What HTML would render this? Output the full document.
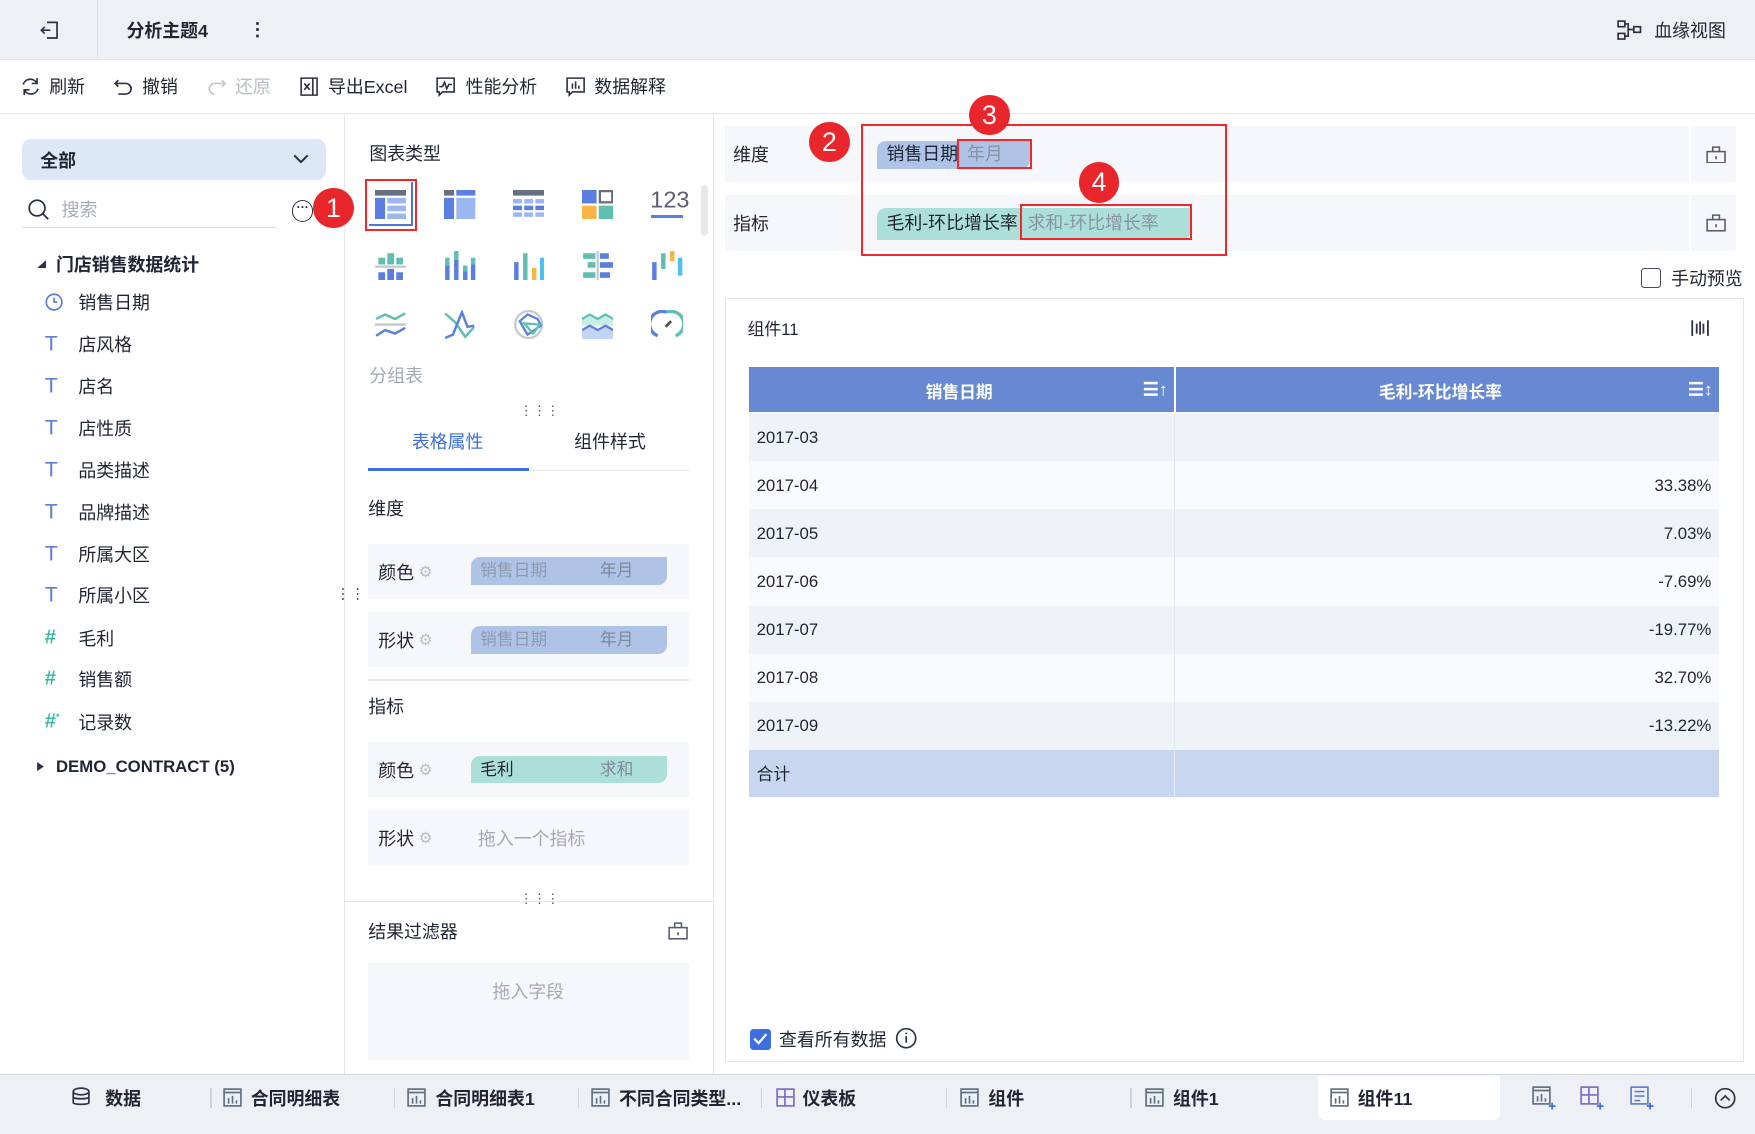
<!DOCTYPE html>
<html><head><meta charset="utf-8">
<style>
*{box-sizing:border-box;margin:0;padding:0}
html,body{width:1755px;height:1134px;overflow:hidden;background:#fff}
#r{zoom:1.11926;width:1568px;height:1013px;position:relative;font-family:"Liberation Sans","Noto Sans CJK SC",sans-serif;font-size:16px;color:#1f2533}
.a{position:absolute;white-space:nowrap}
.c{position:absolute;transform:translateY(-50%);white-space:nowrap}
.badge{position:absolute;width:36px;height:36px;border-radius:50%;background:#e8262b;color:#fff;font-size:24px;text-align:center;line-height:36px;font-family:"Liberation Sans",sans-serif}
.rb{position:absolute;border:2.5px solid #f2262d}
.row{position:absolute;background:#f6f7fb}
.pill{position:absolute;border-radius:8px 0 8px 0;height:25px;line-height:25px;font-size:15px}
.gray{color:#9aa1ad}
svg{position:absolute}
</style></head><body><div id="r">
<!-- top bar -->
<div class="a" style="left:0;top:0;width:1568px;height:54px;background:#edf0f5;border-bottom:1px solid #dfe3ea"></div>
<div class="a" style="left:87px;top:0;width:1px;height:54px;background:#dfe3ea"></div>
<svg style="left:34px;top:17px" width="20" height="20" viewBox="0 0 20 20" fill="none" stroke="#2a3244" stroke-width="1.5"><path d="M8 3h9v14H8M11 10H3M6 7l-3 3 3 3"/></svg>
<div class="c" style="left:113px;top:27px;font-weight:bold;font-size:16px">分析主题4</div>
<div class="c" style="left:222px;top:27px;font-weight:bold">⋮</div>
<svg style="left:1445px;top:18px" width="22" height="18" viewBox="0 0 22 18" fill="none" stroke="#2a3244" stroke-width="1.5"><rect x="1" y="1" width="6" height="5"/><rect x="1" y="12" width="6" height="5"/><rect x="15" y="6" width="6" height="5"/><path d="M7 3.5h3v11H7M10 8.5h5"/></svg>
<div class="c" style="left:1478px;top:27px">血缘视图</div>
<!-- toolbar -->
<div class="a" style="left:0;top:101px;width:1568px;height:1px;background:#e3e6ec"></div>
<svg style="left:18px;top:68px" width="19" height="19" viewBox="0 0 20 20" fill="none" stroke="#2a3244" stroke-width="1.6"><path d="M16 7a7 7 0 0 0-13 1M4 13a7 7 0 0 0 13-1M16 2v5h-5M4 18v-5h5"/></svg>
<div class="c" style="left:44px;top:77px">刷新</div>
<svg style="left:101px;top:68px" width="19" height="19" viewBox="0 0 20 20" fill="none" stroke="#2a3244" stroke-width="1.6"><path d="M5 4L2 7l3 3M2 7h10a5 5 0 0 1 0 10H5"/></svg>
<div class="c" style="left:127px;top:77px">撤销</div>
<svg style="left:184px;top:68px" width="19" height="19" viewBox="0 0 20 20" fill="none" stroke="#c2c7d0" stroke-width="1.6"><path d="M15 4l3 3-3 3M18 7H8a5 5 0 0 0 0 10"/></svg>
<div class="c gray" style="left:210px;top:77px;color:#b9bec8">还原</div>
<svg style="left:267px;top:68px" width="19" height="19" viewBox="0 0 20 20" fill="none" stroke="#2a3244" stroke-width="1.5"><path d="M2 2h11v16H2zM13 2h4v16h-4M5 7l5 6M10 7l-5 6"/></svg>
<div class="c" style="left:293px;top:77px">导出Excel</div>
<svg style="left:389px;top:68px" width="19" height="19" viewBox="0 0 20 20" fill="none" stroke="#2a3244" stroke-width="1.5"><path d="M2 2h16v13H7l-3 3v-3H2zM4 10h3l2-4 2 6 2-4h3"/></svg>
<div class="c" style="left:416px;top:77px">性能分析</div>
<svg style="left:505px;top:68px" width="19" height="19" viewBox="0 0 20 20" fill="none" stroke="#2a3244" stroke-width="1.5"><path d="M2 2h16v13H7l-3 3v-3H2zM7 7v5M10 5v7M13 9v3"/></svg>
<div class="c" style="left:531px;top:77px">数据解释</div>

<!-- left panel -->
<div class="a" style="left:307px;top:102px;width:1px;height:858px;background:#e3e6ec"></div>
<div class="a" style="left:20px;top:124px;width:271px;height:37px;background:#dce7f8;border-radius:8px"></div>
<div class="c" style="left:36px;top:143px;font-weight:bold">全部</div>
<svg style="left:261px;top:136px" width="16" height="12" viewBox="0 0 16 12" fill="none" stroke="#2a3244" stroke-width="1.8"><path d="M2 3l6 6 6-6"/></svg>
<svg style="left:24px;top:177px" width="21" height="21" viewBox="0 0 21 21" fill="none" stroke="#2a3244" stroke-width="1.6"><circle cx="9" cy="9" r="7"/><path d="M14 14l5 5"/></svg>
<div class="c" style="left:55px;top:187px;color:#a7adb8">搜索</div>
<div class="a" style="left:20px;top:203px;width:227px;height:1px;background:#d9dde4"></div>
<div class="a" style="left:261px;top:179px;width:19px;height:19px;border:1.5px solid #2a3244;border-radius:50%;font-size:11px;line-height:12px;text-align:center;font-weight:bold">···</div>
<div class="badge" style="left:280px;top:168px">1</div>
<svg style="left:32px;top:231px" width="10" height="10" viewBox="0 0 10 10"><path d="M1 8h8V1z" fill="#2a3244"/></svg>
<div class="c" style="left:50px;top:236px;font-weight:bold">门店销售数据统计</div>
<svg style="left:39px;top:261px" width="18" height="18" viewBox="0 0 18 18" fill="none" stroke="#5b7fd6" stroke-width="1.5"><circle cx="9" cy="9" r="7"/><path d="M9 5v4h3"/></svg>
<div class="c" style="left:70px;top:270px">销售日期</div>
<div class="c" style="left:40px;top:307px;color:#5b7fd6;font-size:19px">T</div><div class="c" style="left:70px;top:307px">店风格</div>
<div class="c" style="left:40px;top:345px;color:#5b7fd6;font-size:19px">T</div><div class="c" style="left:70px;top:345px">店名</div>
<div class="c" style="left:40px;top:382px;color:#5b7fd6;font-size:19px">T</div><div class="c" style="left:70px;top:382px">店性质</div>
<div class="c" style="left:40px;top:420px;color:#5b7fd6;font-size:19px">T</div><div class="c" style="left:70px;top:420px">品类描述</div>
<div class="c" style="left:40px;top:457px;color:#5b7fd6;font-size:19px">T</div><div class="c" style="left:70px;top:457px">品牌描述</div>
<div class="c" style="left:40px;top:495px;color:#5b7fd6;font-size:19px">T</div><div class="c" style="left:70px;top:495px">所属大区</div>
<div class="c" style="left:40px;top:532px;color:#5b7fd6;font-size:19px">T</div><div class="c" style="left:70px;top:532px">所属小区</div>
<div class="c" style="left:40px;top:570px;color:#3fb8a3;font-size:18px;font-weight:bold">#</div><div class="c" style="left:70px;top:570px">毛利</div>
<div class="c" style="left:40px;top:607px;color:#3fb8a3;font-size:18px;font-weight:bold">#</div><div class="c" style="left:70px;top:607px">销售额</div>
<div class="c" style="left:40px;top:645px;color:#3fb8a3;font-size:18px;font-weight:bold">#<sup style="font-size:8px">*</sup></div><div class="c" style="left:70px;top:645px">记录数</div>
<svg style="left:32px;top:680px" width="8" height="10" viewBox="0 0 8 10"><path d="M1 1l6 4-6 4z" fill="#2a3244"/></svg>
<div class="c" style="left:50px;top:685px;font-weight:bold;font-size:15px">DEMO_CONTRACT (5)</div>
<div class="c" style="left:300px;top:532px;color:#555;font-size:13px;line-height:6px">⋮⋮</div>

<!-- middle panel -->
<div class="a" style="left:637px;top:102px;width:1px;height:858px;background:#e3e6ec"></div>
<div class="c" style="left:330px;top:137px">图表类型</div>
<div class="a" style="left:626px;top:165px;width:7px;height:46px;background:#e6e8ec;border-radius:4px"></div>
<div class="rb" style="left:326px;top:160px;width:47px;height:46px"></div>
<div class="a" style="left:330px;top:163px;width:39px;height:39px;border-bottom:2px solid #4b76e0;border-right:2px solid #4b76e0"></div>
<svg style="left:335px;top:170px" width="28" height="26" viewBox="0 0 28 26"><rect x="0" y="0" width="28" height="5" fill="#666f80"/><rect x="0" y="7" width="9" height="19" fill="#5b7fe0"/><rect x="11" y="7" width="17" height="5" fill="#9bb6f0"/><rect x="11" y="14" width="17" height="5" fill="#9bb6f0"/><rect x="11" y="21" width="17" height="5" fill="#9bb6f0"/></svg>
<svg style="left:397px;top:170px" width="28" height="26" viewBox="0 0 28 26"><rect x="0" y="0" width="9" height="5" fill="#666f80"/><rect x="11" y="0" width="17" height="5" fill="#5b7fe0"/><rect x="0" y="7" width="9" height="19" fill="#5b7fe0"/><rect x="11" y="7" width="17" height="19" fill="#9bb6f0"/></svg>
<svg style="left:458px;top:170px" width="28" height="26" viewBox="0 0 28 26"><rect x="0" y="0" width="28" height="5" fill="#666f80"/><g fill="#9bb6f0"><rect x="0" y="8" width="8" height="4"/><rect x="10" y="8" width="8" height="4"/><rect x="20" y="8" width="8" height="4"/><rect x="0" y="20" width="8" height="4"/><rect x="10" y="20" width="8" height="4"/><rect x="20" y="20" width="8" height="4"/></g><g fill="#5b7fe0"><rect x="0" y="14" width="8" height="4"/><rect x="10" y="14" width="8" height="4"/><rect x="20" y="14" width="8" height="4"/></g></svg>
<svg style="left:520px;top:170px" width="28" height="26" viewBox="0 0 28 26"><rect x="0" y="0" width="13" height="12" fill="#5b7fe0"/><rect x="16" y="1" width="11" height="10" fill="none" stroke="#666f80" stroke-width="2"/><rect x="0" y="14" width="13" height="12" fill="#f7b547"/><rect x="15" y="14" width="13" height="12" fill="#5fbfb0"/></svg>
<div class="c" style="left:581px;top:179px;font-size:21px;color:#5a6070">123</div>
<div class="a" style="left:582px;top:192px;width:28px;height:3px;background:#5b7fe0"></div>
<svg style="left:335px;top:224px" width="28" height="26" viewBox="0 0 28 26"><g fill="#5fbfb0"><rect x="3" y="6" width="6" height="6"/><rect x="11" y="2" width="6" height="10"/><rect x="19" y="6" width="6" height="6"/></g><rect x="0" y="13" width="28" height="2" fill="#c3c8d2"/><g fill="#5b7fe0"><rect x="3" y="19" width="6" height="7"/><rect x="11" y="16" width="6" height="10"/><rect x="19" y="19" width="6" height="7"/></g></svg>
<svg style="left:397px;top:224px" width="28" height="26" viewBox="0 0 28 26"><g fill="#5b7fe0"><rect x="1" y="13" width="4" height="13"/><rect x="9" y="8" width="4" height="18"/><rect x="17" y="18" width="4" height="8"/><rect x="24" y="12" width="4" height="14"/></g><g fill="#5fbfb0"><rect x="1" y="6" width="4" height="7"/><rect x="9" y="0" width="4" height="8"/><rect x="17" y="13" width="4" height="5"/><rect x="24" y="6" width="4" height="6"/></g></svg>
<svg style="left:458px;top:224px" width="28" height="26" viewBox="0 0 28 26"><rect x="1" y="10" width="4" height="16" fill="#5b7fe0"/><rect x="9" y="2" width="4" height="24" fill="#5fbfb0"/><rect x="17" y="15" width="4" height="11" fill="#f7b547"/><rect x="24" y="6" width="4" height="20" fill="#4ec1f0"/></svg>
<svg style="left:520px;top:224px" width="28" height="26" viewBox="0 0 28 26"><rect x="13" y="0" width="2" height="26" fill="#c3c8d2"/><g fill="#5fbfb0"><rect x="1" y="2" width="11" height="5"/><rect x="5" y="10" width="7" height="5"/><rect x="1" y="19" width="11" height="5"/></g><g fill="#5b7fe0"><rect x="16" y="2" width="8" height="5"/><rect x="16" y="10" width="12" height="5"/><rect x="16" y="19" width="9" height="5"/></g></svg>
<svg style="left:582px;top:224px" width="28" height="26" viewBox="0 0 28 26"><rect x="1" y="10" width="4" height="16" fill="#5b7fe0"/><rect x="9" y="2" width="4" height="14" fill="#5fbfb0"/><rect x="17" y="0" width="4" height="9" fill="#f7b547"/><rect x="24" y="6" width="4" height="16" fill="#4ec1f0"/></svg>
<svg style="left:335px;top:277px" width="28" height="26" viewBox="0 0 28 26" fill="none" stroke-width="2.2"><path d="M1 8l8-4 9 4 9-5" stroke="#5fbfb0"/><path d="M0 13h28" stroke="#c3c8d2"/><path d="M1 23l8-5 9 3 9-5" stroke="#5b7fe0"/></svg>
<svg style="left:397px;top:277px" width="28" height="26" viewBox="0 0 28 26" fill="none" stroke-width="2.2"><path d="M1 3l9 8 9 13 8-9" stroke="#5fbfb0"/><path d="M1 25l7-3 8-20 5 13 6-1" stroke="#5b7fe0"/></svg>
<svg style="left:458px;top:277px" width="28" height="26" viewBox="0 0 28 26" fill="none" stroke-width="2"><circle cx="14" cy="13" r="12" stroke="#c3c8d2"/><path d="M6 10l7-6 9 4 3 6-12 8z" stroke="#5b7fe0"/><path d="M10 12l14 1-6 8z" stroke="#5fbfb0"/></svg>
<svg style="left:520px;top:277px" width="28" height="26" viewBox="0 0 28 26"><path d="M0 8l7-4 7 4 7-4 7 4v6H0z" fill="#c8ece6"/><path d="M0 8l7-4 7 4 7-4 7 4" stroke="#5fbfb0" stroke-width="2" fill="none"/><path d="M0 18l7-4 7 4 7-4 7 4v8H0z" fill="#c5d4f5"/><path d="M0 18l7-4 7 4 7-4 7 4" stroke="#5b7fe0" stroke-width="2" fill="none"/></svg>
<svg style="left:582px;top:277px" width="28" height="26" viewBox="0 0 28 26" fill="none" stroke-width="3"><path d="M6 23A11 11 0 0 1 14 2" stroke="#5b7fe0"/><path d="M14 2a11 11 0 0 1 8 21" stroke="#5fbfb0"/><path d="M13 15l5-5" stroke="#555" stroke-width="2.5"/></svg>
<div class="c" style="left:330px;top:335px;color:#a3a9b4">分组表</div>
<div class="c" style="left:464px;top:367px;font-size:12px;color:#555">⋮⋮⋮</div>
<div class="c" style="left:368px;top:394px;color:#3e6fe0">表格属性</div>
<div class="c" style="left:513px;top:394px">组件样式</div>
<div class="a" style="left:329px;top:420px;width:287px;height:1px;background:#e3e6ec"></div>
<div class="a" style="left:329px;top:418px;width:144px;height:3px;background:#3e6fe0"></div>
<div class="c" style="left:329px;top:454px">维度</div>
<div class="row" style="left:329px;top:486px;width:287px;height:49px"></div>
<div class="c" style="left:338px;top:511px">颜色</div><div class="c" style="left:374px;top:511px;color:#b8bdc6;font-size:14px">⚙</div>
<div class="pill" style="left:421px;top:498px;width:175px;background:#aec3e6"><span style="position:absolute;left:8px;color:#8e9ab0">销售日期</span><span style="position:absolute;left:115px;color:#80889a">年月</span></div>
<div class="row" style="left:329px;top:547px;width:287px;height:49px"></div>
<div class="c" style="left:338px;top:572px">形状</div><div class="c" style="left:374px;top:572px;color:#b8bdc6;font-size:14px">⚙</div>
<div class="pill" style="left:421px;top:559px;width:175px;background:#aec3e6"><span style="position:absolute;left:8px;color:#8e9ab0">销售日期</span><span style="position:absolute;left:115px;color:#80889a">年月</span></div>
<div class="a" style="left:329px;top:607px;width:287px;height:1px;background:#e3e6ec"></div>
<div class="c" style="left:329px;top:631px">指标</div>
<div class="row" style="left:329px;top:663px;width:287px;height:49px"></div>
<div class="c" style="left:338px;top:688px">颜色</div><div class="c" style="left:374px;top:688px;color:#b8bdc6;font-size:14px">⚙</div>
<div class="pill" style="left:421px;top:675px;width:175px;background:#acdfd8"><span style="position:absolute;left:8px">毛利</span><span style="position:absolute;left:115px;color:#80889a">求和</span></div>
<div class="row" style="left:329px;top:724px;width:287px;height:49px"></div>
<div class="c" style="left:338px;top:749px">形状</div><div class="c" style="left:374px;top:749px;color:#b8bdc6;font-size:14px">⚙</div>
<div class="c" style="left:427px;top:749px;color:#a3a9b4">拖入一个指标</div>
<div class="c" style="left:464px;top:803px;font-size:12px;color:#555">⋮⋮⋮</div>
<div class="a" style="left:308px;top:805px;width:329px;height:1px;background:#e3e6ec"></div>
<div class="c" style="left:329px;top:832px">结果过滤器</div>
<svg style="left:597px;top:824px" width="18" height="16" viewBox="0 0 18 16" fill="none" stroke="#555d6c" stroke-width="1.4"><rect x="1" y="5" width="16" height="10"/><path d="M6 5V1h6v4M9 9v3"/></svg>
<div class="row" style="left:329px;top:860px;width:287px;height:87px"></div>
<div class="c" style="left:440px;top:885px;color:#a3a9b4">拖入字段</div>

<!-- right -->
<div class="row" style="left:648px;top:113px;width:903px;height:50px"></div>
<div class="a" style="left:768px;top:113px;width:2px;height:50px;background:#fff"></div>
<div class="a" style="left:1509px;top:113px;width:2px;height:50px;background:#fff"></div>
<div class="c" style="left:655px;top:138px">维度</div>
<div class="pill" style="left:784px;top:126px;width:136px;background:#aec3e6;font-size:16px"><span style="position:absolute;left:8px">销售日期</span><span style="position:absolute;left:80px;color:#8a93a3">年月</span></div>
<svg style="left:1524px;top:130px" width="18" height="16" viewBox="0 0 18 16" fill="none" stroke="#555d6c" stroke-width="1.4"><rect x="1" y="5" width="16" height="10"/><path d="M6 5V1h6v4M9 9v3"/></svg>
<div class="row" style="left:648px;top:174px;width:903px;height:50px"></div>
<div class="a" style="left:768px;top:174px;width:2px;height:50px;background:#fff"></div>
<div class="a" style="left:1509px;top:174px;width:2px;height:50px;background:#fff"></div>
<div class="c" style="left:655px;top:199px">指标</div>
<div class="pill" style="left:784px;top:186px;width:280px;height:28px;line-height:28px;background:#acdfd8;font-size:16px"><span style="position:absolute;left:8px">毛利-环比增长率</span><span style="position:absolute;left:134px;color:#8a93a3">求和-环比增长率</span></div>
<svg style="left:1524px;top:191px" width="18" height="16" viewBox="0 0 18 16" fill="none" stroke="#555d6c" stroke-width="1.4"><rect x="1" y="5" width="16" height="10"/><path d="M6 5V1h6v4M9 9v3"/></svg>
<div class="rb" style="left:769px;top:111px;width:327px;height:118px"></div>
<div class="rb" style="left:855px;top:124px;width:67px;height:27px"></div>
<div class="rb" style="left:911px;top:182px;width:154px;height:32px"></div>
<div class="badge" style="left:723px;top:109px">2</div>
<div class="badge" style="left:866px;top:85px">3</div>
<div class="badge" style="left:964px;top:145px">4</div>
<div class="a" style="left:1466px;top:239px;width:18px;height:18px;border:1.5px solid #444c5a;border-radius:3px"></div>
<div class="c" style="left:1493px;top:248px">手动预览</div>

<div class="a" style="left:648px;top:266px;width:910px;height:683px;border:1px solid #e3e6ec"></div>
<div class="c" style="left:668px;top:293px;font-size:15px">组件11</div>
<svg style="left:1510px;top:284px" width="18" height="18" viewBox="0 0 18 18" stroke="#2a3244" stroke-width="1.6"><path d="M2 2v14M6 5v9M9 3v12M12 5v9M16 2v14"/></svg>
<div class="a" style="left:669px;top:328px;width:867px;height:40px;background:#6689d2"></div>
<div class="a" style="left:1049px;top:328px;width:2px;height:384px;background:#fff"></div>
<div class="c" style="left:827px;top:349px;color:#fff;font-weight:bold;font-size:15px">销售日期</div>
<div class="c" style="left:1021px;top:348px;color:#fff;font-weight:bold">☰↑</div>
<div class="c" style="left:1232px;top:349px;color:#fff;font-weight:bold;font-size:15px">毛利-环比增长率</div>
<div class="c" style="left:1508px;top:348px;color:#fff;font-weight:bold">☰↕</div>
<div class="a" style="left:669px;top:369px;width:867px;height:43px;background:#eef2f9"></div>
<div class="a" style="left:669px;top:412px;width:867px;height:43px;background:#f9fafd"></div>
<div class="a" style="left:669px;top:455px;width:867px;height:43px;background:#eef2f9"></div>
<div class="a" style="left:669px;top:498px;width:867px;height:43px;background:#f9fafd"></div>
<div class="a" style="left:669px;top:541px;width:867px;height:43px;background:#eef2f9"></div>
<div class="a" style="left:669px;top:584px;width:867px;height:43px;background:#f9fafd"></div>
<div class="a" style="left:669px;top:627px;width:867px;height:43px;background:#eef2f9"></div>
<div class="a" style="left:669px;top:670px;width:867px;height:42px;background:#c8d6ef"></div>
<div class="a" style="left:1049px;top:369px;width:1px;height:343px;background:#e3e8f2"></div>
<div class="c" style="left:676px;top:391px;font-size:15px">2017-03</div>
<div class="c" style="left:676px;top:434px;font-size:15px">2017-04</div><div class="c" style="right:39px;top:434px;font-size:15px">33.38%</div>
<div class="c" style="left:676px;top:477px;font-size:15px">2017-05</div><div class="c" style="right:39px;top:477px;font-size:15px">7.03%</div>
<div class="c" style="left:676px;top:520px;font-size:15px">2017-06</div><div class="c" style="right:39px;top:520px;font-size:15px">-7.69%</div>
<div class="c" style="left:676px;top:563px;font-size:15px">2017-07</div><div class="c" style="right:39px;top:563px;font-size:15px">-19.77%</div>
<div class="c" style="left:676px;top:606px;font-size:15px">2017-08</div><div class="c" style="right:39px;top:606px;font-size:15px">32.70%</div>
<div class="c" style="left:676px;top:649px;font-size:15px">2017-09</div><div class="c" style="right:39px;top:649px;font-size:15px">-13.22%</div>
<div class="c" style="left:676px;top:691px;font-size:15px">合计</div>
<div class="a" style="left:670px;top:919px;width:19px;height:19px;background:#3e6fe0;border-radius:3px"></div>
<svg style="left:673px;top:923px" width="13" height="11" viewBox="0 0 13 11" fill="none" stroke="#fff" stroke-width="2"><path d="M1 5l4 4 7-8"/></svg>
<div class="c" style="left:696px;top:928px">查看所有数据</div>
<svg style="left:800px;top:918px" width="20" height="20" viewBox="0 0 20 20" fill="none" stroke="#2a3244" stroke-width="1.5"><circle cx="10" cy="10" r="8.5"/><path d="M10 8v6M10 5v1.5"/></svg>

<!-- bottom bar -->
<div class="a" style="left:0;top:960px;width:1568px;height:53px;background:#edf0f5;border-top:1px solid #d3d8e0"></div>
<div class="a" style="left:1178px;top:961px;width:162px;height:40px;background:#fff;border-radius:0 0 6px 6px"></div>
<svg style="left:63px;top:971px" width="18" height="18" viewBox="0 0 18 18" fill="none" stroke="#2a3244" stroke-width="1.5"><ellipse cx="9" cy="4" rx="7" ry="3"/><path d="M2 4v10c0 2 14 2 14 0V4M2 9c0 2 14 2 14 0"/></svg>
<div class="c" style="left:94px;top:981px;font-weight:bold">数据</div>
<div class="a" style="left:188px;top:972px;width:1px;height:18px;background:#cfd4dc"></div>
<div class="a" style="left:352px;top:972px;width:1px;height:18px;background:#cfd4dc"></div>
<div class="a" style="left:516px;top:972px;width:1px;height:18px;background:#cfd4dc"></div>
<div class="a" style="left:680px;top:972px;width:1px;height:18px;background:#cfd4dc"></div>
<div class="a" style="left:845px;top:972px;width:1px;height:18px;background:#cfd4dc"></div>
<div class="a" style="left:1010px;top:972px;width:1px;height:18px;background:#cfd4dc"></div>
<div class="a" style="left:1511px;top:972px;width:1px;height:18px;background:#cfd4dc"></div>
<svg style="left:199px;top:972px" width="17" height="17" viewBox="0 0 17 17" fill="none" stroke="#607080" stroke-width="1.5"><rect x="1" y="1" width="15" height="15"/><path d="M1 4h15M5 14V9M8.5 14V7M12 14v-3"/></svg>
<div class="c" style="left:224px;top:981px;font-weight:bold">合同明细表</div>
<svg style="left:364px;top:972px" width="17" height="17" viewBox="0 0 17 17" fill="none" stroke="#607080" stroke-width="1.5"><rect x="1" y="1" width="15" height="15"/><path d="M1 4h15M5 14V9M8.5 14V7M12 14v-3"/></svg>
<div class="c" style="left:389px;top:981px;font-weight:bold">合同明细表1</div>
<svg style="left:528px;top:972px" width="17" height="17" viewBox="0 0 17 17" fill="none" stroke="#607080" stroke-width="1.5"><rect x="1" y="1" width="15" height="15"/><path d="M1 4h15M5 14V9M8.5 14V7M12 14v-3"/></svg>
<div class="c" style="left:553px;top:981px;font-weight:bold">不同合同类型...</div>
<svg style="left:693px;top:972px" width="17" height="17" viewBox="0 0 17 17" fill="none" stroke="#7b6cc9" stroke-width="1.5"><rect x="1" y="1" width="15" height="15"/><path d="M1 8h15M8 1v15"/></svg>
<div class="c" style="left:717px;top:981px;font-weight:bold">仪表板</div>
<svg style="left:858px;top:972px" width="17" height="17" viewBox="0 0 17 17" fill="none" stroke="#607080" stroke-width="1.5"><rect x="1" y="1" width="15" height="15"/><path d="M1 4h15M5 14V9M8.5 14V7M12 14v-3"/></svg>
<div class="c" style="left:883px;top:981px;font-weight:bold">组件</div>
<svg style="left:1023px;top:972px" width="17" height="17" viewBox="0 0 17 17" fill="none" stroke="#607080" stroke-width="1.5"><rect x="1" y="1" width="15" height="15"/><path d="M1 4h15M5 14V9M8.5 14V7M12 14v-3"/></svg>
<div class="c" style="left:1048px;top:981px;font-weight:bold">组件1</div>
<svg style="left:1188px;top:972px" width="17" height="17" viewBox="0 0 17 17" fill="none" stroke="#607080" stroke-width="1.5"><rect x="1" y="1" width="15" height="15"/><path d="M1 4h15M5 14V9M8.5 14V7M12 14v-3"/></svg>
<div class="c" style="left:1213px;top:981px;font-weight:bold">组件11</div>
<svg style="left:1369px;top:970px" width="22" height="22" viewBox="0 0 22 22" fill="none" stroke="#607080" stroke-width="1.5"><rect x="1" y="1" width="15" height="15"/><path d="M1 4h15M5 14V9M8.5 14V7M12 14v-3"/><path d="M18 15v6M15 18h6" stroke="#3e6fe0"/></svg>
<svg style="left:1412px;top:970px" width="22" height="22" viewBox="0 0 22 22" fill="none" stroke="#7b6cc9" stroke-width="1.5"><rect x="1" y="1" width="15" height="15"/><path d="M1 8h15M8 1v15"/><path d="M18 15v6M15 18h6" stroke="#3e6fe0"/></svg>
<svg style="left:1456px;top:970px" width="22" height="22" viewBox="0 0 22 22" fill="none" stroke="#5b7fd6" stroke-width="1.5"><rect x="1" y="1" width="15" height="15"/><path d="M4 5h9M4 9h9M4 13h5"/><path d="M18 15v6M15 18h6" stroke="#3e6fe0"/></svg>
<svg style="left:1531px;top:971px" width="20" height="20" viewBox="0 0 20 20" fill="none" stroke="#2a3244" stroke-width="1.5"><circle cx="10" cy="10" r="8.5"/><path d="M6 12l4-4 4 4"/></svg>
</div></body></html>
